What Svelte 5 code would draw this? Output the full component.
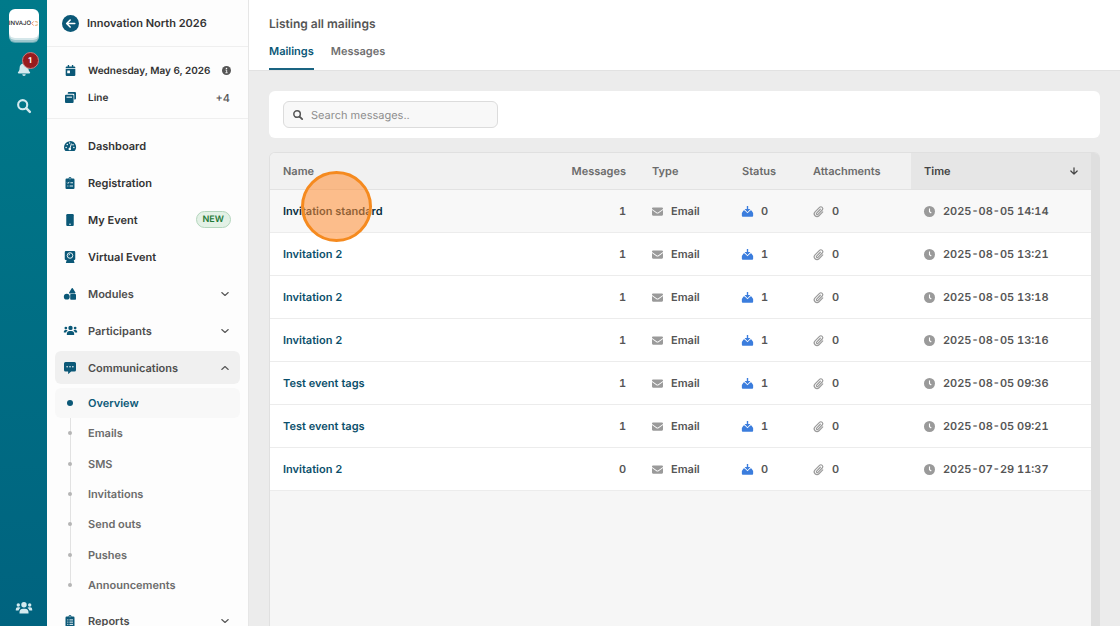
<script lang="ts">
	const navItems = [
		{ label: "Dashboard", icon: "gauge" },
		{ label: "Registration", icon: "clipboard" },
		{ label: "My Event", icon: "phone", badge: "NEW" },
		{ label: "Virtual Event", icon: "webcam" },
		{ label: "Modules", icon: "shapes", group: true },
		{ label: "Participants", icon: "users", group: true },
		{
			label: "Communications",
			icon: "comment",
			group: true,
			children: [
				"Overview",
				"Emails",
				"SMS",
				"Invitations",
				"Send outs",
				"Pushes",
				"Announcements",
			],
		},
		{ label: "Reports", icon: "report", group: true },
	];

	const mailings = [
		{ name: "Invitation standard", messages: 1, status: 0, time: "2025-08-05 14:14" },
		{ name: "Invitation 2", messages: 1, status: 1, time: "2025-08-05 13:21" },
		{ name: "Invitation 2", messages: 1, status: 1, time: "2025-08-05 13:18" },
		{ name: "Invitation 2", messages: 1, status: 1, time: "2025-08-05 13:16" },
		{ name: "Test event tags", messages: 1, status: 1, time: "2025-08-05 09:36" },
		{ name: "Test event tags", messages: 1, status: 1, time: "2025-08-05 09:21" },
		{ name: "Invitation 2", messages: 0, status: 0, time: "2025-07-29 11:37" },
	];

	let open = $state("Communications");
	let search = $state("");

	const visible = $derived(
		mailings.filter((m) => m.name.toLowerCase().includes(search.toLowerCase()))
	);

	function toggle(label: string) {
		open = open === label ? "" : label;
	}
</script>

{#snippet icon(name: string)}
	<svg class="icon {name}" viewBox="0 0 16 16" aria-hidden="true">
		{#if name === "gauge"}
			<path
				fill="currentColor"
				d="M8 1.500A8 8 0 0 0 0 9.500c0 1.700.5 3.200 1.300 4.500.2.400.500.500.900.500h11.600c.4 0 .7-.1.900-.5A8 8 0 0 0 8 1.500z"
			/>
			<path d="M7.700 12 9.800 5.300" stroke="#fff" stroke-width="1.300" stroke-linecap="round" />
			<circle cx="7.700" cy="12" r="1.700" fill="#fff" />
			<g fill="#fff">
				<circle cx="2.800" cy="10" r="1" />
				<circle cx="4.300" cy="6" r="1" />
				<circle cx="7.500" cy="4" r="1" />
				<circle cx="12" cy="6.200" r="1" />
				<circle cx="13.200" cy="10" r="1" />
			</g>
		{:else if name === "clipboard" || name === "report"}
			<path
				fill="currentColor"
				d="M3.500 2H6a2 2 0 0 1 4 0h2.500A1.500 1.500 0 0 1 14 3.500v11a1.500 1.500 0 0 1-1.500 1.500h-9A1.500 1.500 0 0 1 2 14.500v-11A1.500 1.500 0 0 1 3.500 2z"
			/>
			<circle cx="8" cy="2.300" r=".8" fill="#fff" />
			{#if name === "clipboard"}
				<path
					d="m4.300 7.500 1 1 1.700-2M8.500 7.700H12M4.500 12h1.300M7.500 12H12"
					stroke="#fff"
					stroke-width="1.200"
					fill="none"
				/>
			{:else}
				<path
					d="M4.300 6.500h1.500M7.300 6.500H12M4.300 9.500h1.500M7.300 9.500H12M4.300 12.500h1.500M7.300 12.500H12"
					stroke="#fff"
					stroke-width="1.200"
				/>
			{/if}
		{:else if name === "phone"}
			<rect x="3" y="0" width="10" height="16" rx="1.500" fill="currentColor" />
			<circle cx="8" cy="13.800" r="1" fill="#fff" />
		{:else if name === "webcam"}
			<path
				fill="currentColor"
				d="M2.500 0h11A1.500 1.500 0 0 1 15 1.500v9a1.500 1.500 0 0 1-1.500 1.500H13l1 4H2.500l1-4h-1A1.500 1.500 0 0 1 1 10.500v-9A1.500 1.500 0 0 1 2.500 0z"
			/>
			<circle cx="8" cy="6" r="3.700" fill="none" stroke="#fff" stroke-width="1.200" />
			<path d="M6.300 6A1.800 1.800 0 0 1 8 4.300" stroke="#fff" fill="none" />
		{:else if name === "shapes"}
			<circle cx="3.700" cy="11.500" r="3.900" fill="currentColor" />
			<rect x="8.300" y="8" width="7.700" height="7.500" rx="1" fill="currentColor" />
			<path fill="currentColor" d="M10.300.3a.8.800 0 0 1 1.400 0l3.500 5.700a.8.800 0 0 1-.7 1.200h-7a.8.800 0 0 1-.7-1.200z" />
		{:else if name === "users"}
			<g fill="currentColor">
				<circle cx="8" cy="4.800" r="2.700" />
				<circle cx="2.300" cy="5" r="1.700" />
				<circle cx="13.700" cy="5" r="1.700" />
				<path d="M3.500 13.600v-1.300A3.600 3.600 0 0 1 7 8.700h2a3.600 3.600 0 0 1 3.500 3.600v1.300z" />
				<path d="M-.2 10.500V9.300a2 2 0 0 1 2-2h1.400c.5 0 1 .2 1.300.5a4.800 4.800 0 0 0-1.900 2.700z" />
				<path d="M16.200 10.500V9.300a2 2 0 0 0-2-2h-1.400c-.5 0-1 .2-1.300.5a4.800 4.800 0 0 1 1.900 2.700z" />
			</g>
		{:else if name === "comment"}
			<path
				fill="currentColor"
				d="M2 0h12a2 2 0 0 1 2 2v8.500a2 2 0 0 1-2 2H9.500L6.200 15.700c-.3.300-.7.100-.7-.2v-3H2a2 2 0 0 1-2-2V2a2 2 0 0 1 2-2z"
			/>
			<g fill="#fff">
				<circle cx="4.200" cy="6.300" r="1" />
				<circle cx="8" cy="6.300" r="1" />
				<circle cx="11.800" cy="6.300" r="1" />
			</g>
		{:else if name === "calendar"}
			<path
				fill="currentColor"
				d="M1 5.500h14v9a1.500 1.500 0 0 1-1.500 1.500h-11A1.500 1.500 0 0 1 1 14.500zM2.500 2H4V0h2v2h4V0h2v2h1.500A1.500 1.500 0 0 1 15 3.500v1H1v-1A1.500 1.500 0 0 1 2.500 2z"
			/>
			<rect x="3.200" y="8" width="4" height="4" rx=".5" fill="#fff" />
		{:else if name === "windows"}
			<path
				fill="currentColor"
				d="M5.500 0h9A1.500 1.500 0 0 1 16 1.500v8a1.500 1.500 0 0 1-1.500 1.500H13.500V4A1.500 1.500 0 0 0 12 2.500H4v-1A1.500 1.500 0 0 1 5.500 0z"
			/>
			<path
				fill="currentColor"
				d="M1.500 4h9.500a1.500 1.500 0 0 1 1.500 1.500v9A1.500 1.500 0 0 1 11 16H1.500A1.500 1.500 0 0 1 0 14.500v-9A1.500 1.500 0 0 1 1.500 4z"
			/>
			<path d="M2.200 7.500h8" stroke="#fff" stroke-width="1.500" />
		{:else if name === "info"}
			<circle cx="8" cy="8" r="8" fill="currentColor" />
			<circle cx="8" cy="4.300" r="1.400" fill="#fff" />
			<path d="M6.300 7.300H8.300v4.500M6 12h4" stroke="#fff" stroke-width="1.500" fill="none" />
		{:else if name === "bell"}
			<path
				fill="currentColor"
				d="M8 16a2 2 0 0 0 2-2H6a2 2 0 0 0 2 2zm6.700-4.700c-.6-.6-1.700-1.600-1.700-4.800a5 5 0 0 0-4-4.800V1a1 1 0 0 0-2 0v.7a5 5 0 0 0-4 4.800c0 3.200-1.100 4.200-1.700 4.800-.7.700-.2 1.700.7 1.700h12c.9 0 1.400-1 .7-1.700z"
			/>
		{:else if name === "search"}
			<circle cx="6.500" cy="6.500" r="5.200" fill="none" stroke="currentColor" stroke-width="2.400" />
			<path d="m10.500 10.500 4.200 4.200" stroke="currentColor" stroke-width="2.800" stroke-linecap="round" />
		{:else if name === "chevron"}
			<path
				d="m1.500 5 6.500 6 6.500-6"
				fill="none"
				stroke="currentColor"
				stroke-width="2.200"
				stroke-linecap="round"
				stroke-linejoin="round"
			/>
		{:else if name === "back"}
			<circle cx="8" cy="8" r="8" fill="currentColor" />
			<path
				d="M12 8H4.700M7.700 4.700 4.400 8l3.300 3.300"
				fill="none"
				stroke="#fff"
				stroke-width="1.500"
				stroke-linecap="round"
				stroke-linejoin="round"
			/>
		{:else if name === "envelope"}
			<path fill="currentColor" d="M1.500 2h13A1.500 1.500 0 0 1 16 3.500v.8L9.300 9.200a2.200 2.200 0 0 1-2.600 0L0 4.300v-.8A1.500 1.500 0 0 1 1.500 2z" />
			<path fill="currentColor" d="M0 5.900V12.500A1.500 1.500 0 0 0 1.500 14h13a1.500 1.500 0 0 0 1.500-1.500V5.900l-6 4.400a3.400 3.400 0 0 1-4 0z" />
		{:else if name === "inbox"}
			<path fill="currentColor" d="M7 0h2v4.500h3.200L8 9 3.800 4.500H7z" />
			<path
				fill="currentColor"
				d="M2.600 6.500h1.300L8 10.700l4.100-4.200h1.300c.4 0 .7.200.9.600l1.900 3.200v4a1.300 1.300 0 0 1-1.300 1.300H1.100A1.300 1.300 0 0 1-.2 14.300v-4l1.900-3.200c.2-.4.500-.6.900-.6z"
			/>
		{:else if name === "clip"}
			<path
				d="M10.700 4.700 5.300 10.300a1.300 1.300 0 0 0 1.900 1.900l6.200-6.400a2.700 2.700 0 0 0-3.900-3.900L3 8.500a4 4 0 0 0 5.700 5.700l5.500-5.700"
				fill="none"
				stroke="currentColor"
				stroke-width="1.700"
				stroke-linecap="round"
			/>
		{:else if name === "clock"}
			<circle cx="8" cy="8" r="8" fill="currentColor" />
			<path d="M8 3.500V8.300l2.600 1.900" fill="none" stroke="#fff" stroke-width="1.600" />
		{:else if name === "arrow"}
			<path
				d="M8 1.500V14M1.700 8 8 14.300 14.300 8"
				fill="none"
				stroke="currentColor"
				stroke-width="2.500"
				stroke-linecap="round"
				stroke-linejoin="round"
			/>
		{/if}
	</svg>
{/snippet}

<div class="app">
	<div class="rail">
		<a class="logo" href="#home">
			INVAJO
			<svg viewBox="0 0 8 6" aria-hidden="true">
				<path d="M3 .5.700 3 3 5.500" fill="none" stroke="#e67a4e" />
				<path d="M4.500.8h2.700v1.700M7.200 3.500v1.700H4.500" fill="none" stroke="#e0a96a" />
			</svg>
		</a>
		<button class="rail-btn" aria-label="Notifications">
			{@render icon("bell")}
			<span class="count">1</span>
		</button>
		<button class="rail-btn" aria-label="Search">{@render icon("search")}</button>
		<button class="rail-btn last" aria-label="Users">{@render icon("users")}</button>
	</div>

	<aside class="sidebar">
		<header class="event">
			<a href="#events" aria-label="Back">{@render icon("back")}</a>
			<strong>Innovation North 2026</strong>
		</header>

		<div class="details">
			<div class="detail">
				{@render icon("calendar")}
				<span class="date">Wednesday, May 6, 2026</span>
				{@render icon("info")}
			</div>
			<div class="detail">
				{@render icon("windows")}
				<span class="date">Line</span>
				<span class="more">+4</span>
			</div>
		</div>

		<nav>
			{#each navItems as item}
				{#if item.group}
					<button
						class="nav-item group"
						class:open={open === item.label}
						aria-expanded={open === item.label}
						onclick={() => toggle(item.label)}
					>
						{@render icon(item.icon)}
						<span>{item.label}</span>
						{@render icon("chevron")}
					</button>
				{:else}
					<a class="nav-item" href="#{item.icon}">
						{@render icon(item.icon)}
						<span>{item.label}</span>
						{#if item.badge}<span class="badge">{item.badge}</span>{/if}
					</a>
				{/if}
				{#if item.children && open === item.label}
					<ul class="sub">
						{#each item.children as child, i}
							<li>
								<a href="#{child}" class:active={i === 0}>
									<span class="dot"></span>
									{child}
								</a>
							</li>
						{/each}
					</ul>
				{/if}
			{/each}
		</nav>
	</aside>

	<main>
		<header class="page-head">
			<h1>Listing all mailings</h1>
			<div class="tabs">
				<a href="#mailings" class="active">Mailings</a>
				<a href="#messages">Messages</a>
			</div>
		</header>

		<div class="content">
			<div class="toolbar">
				<label class="search-box">
					{@render icon("search")}
					<input type="text" placeholder="Search messages.." aria-label="Search messages" bind:value={search} />
				</label>
			</div>

			<div class="table-card">
				<div class="table-area">
					<table>
						<colgroup>
							<col />
							<col class="w-messages" />
							<col class="w-type" />
							<col class="w-status" />
							<col class="w-attachments" />
							<col class="w-time" />
						</colgroup>
						<thead>
							<tr>
								<th>Name</th>
								<th class="num">Messages</th>
								<th>Type</th>
								<th>Status</th>
								<th>Attachments</th>
								<th class="sorted" aria-sort="descending">
									<button>Time {@render icon("arrow")}</button>
								</th>
							</tr>
						</thead>
						<tbody>
							{#each visible as m, i}
								<tr class:hovered={i === 0}>
									<td class="name">
										<a href="#mailing">{m.name}</a>
										{#if i === 0}<span class="marker"></span>{/if}
									</td>
									<td class="num">{m.messages}</td>
									<td><span class="cell">{@render icon("envelope")}Email</span></td>
									<td><span class="cell">{@render icon("inbox")}{m.status}</span></td>
									<td><span class="cell">{@render icon("clip")}0</span></td>
									<td><span class="cell">{@render icon("clock")}{m.time}</span></td>
								</tr>
							{/each}
						</tbody>
					</table>
				</div>
				<div class="scrollbar"></div>
			</div>
		</div>
	</main>
</div>

<style>
	:global(body) {
		font-family: Inter, "Liberation Sans", sans-serif;
		font-size: 11px;
		font-weight: 600;
		line-height: 16px;
		text-rendering: geometricPrecision;
		color: #555;
	}

	.app {
		display: flex;
		height: 100vh;
		overflow: hidden;
		background: #ececec;
	}

	.app * {
		box-sizing: border-box;
	}

	a {
		color: inherit;
		text-decoration: none;
	}

	button {
		font: inherit;
		text-rendering: inherit;
		color: inherit;
		background: none;
		border: 0;
		padding: 0;
		cursor: pointer;
	}

	.icon {
		flex: none;
		width: 12px;
		height: 12px;
		overflow: visible;
	}

	/* Rail */
	.rail {
		flex: none;
		width: 47px;
		display: flex;
		flex-direction: column;
		align-items: center;
		padding: 9px 0 10px;
		background: linear-gradient(#007a8a, #00637f);
		color: #d3eaef;
	}

	.logo {
		display: flex;
		align-items: center;
		justify-content: center;
		width: 30px;
		height: 29px;
		border-radius: 6px;
		background: #fff;
		box-shadow:
			0 2px 0 #d5e7ea,
			0 4px 0 #9cc7ce,
			0 5px 0 #5aa5b0;
		color: #222;
		font-size: 6px;
		font-weight: 500;
	}

	.logo svg {
		width: 7px;
		height: 5px;
	}

	.rail-btn {
		position: relative;
		display: flex;
		margin-top: 24px;
	}

	.rail-btn .icon {
		width: 14px;
		height: 14px;
	}

	.rail-btn .users {
		width: 16px;
		height: 16px;
	}

	.rail-btn + .rail-btn {
		margin-top: 23px;
	}

	.rail-btn + .rail-btn.last {
		margin-top: auto;
	}

	.count {
		position: absolute;
		top: -10px;
		left: 5px;
		width: 17px;
		height: 17px;
		border: 1px solid #c87f83;
		border-radius: 50%;
		background: #981b1e;
		color: #fff;
		font-size: 8px;
		font-weight: 700;
		line-height: 15px;
		text-align: center;
	}

	/* Sidebar */
	.sidebar {
		flex: none;
		width: 202px;
		overflow: hidden;
		background: #fdfdfd;
		border-right: 1px solid #e6e6e6;
		color: #333;
	}

	.sidebar .icon {
		color: #0b5877;
	}

	.event {
		display: flex;
		align-items: center;
		gap: 8px;
		height: 47px;
		padding: 0 15px;
		border-bottom: 1px solid #efefef;
	}

	.event a {
		display: flex;
	}

	.event .icon {
		width: 17px;
		height: 17px;
	}

	.event strong {
		font-weight: 600;
	}

	.details {
		padding: 10px 18px 7px;
		border-bottom: 1px solid #efefef;
	}

	.detail {
		display: flex;
		align-items: center;
		gap: 12px;
		height: 27px;
	}

	.detail .icon {
		width: 11px;
		height: 11px;
	}

	.sidebar .info {
		width: 9px;
		height: 9px;
		margin-left: auto;
		color: #555;
	}

	.date {
		font-size: 10px;
		white-space: nowrap;
	}

	.more {
		margin-left: auto;
		color: #555;
		font-weight: 500;
	}

	nav {
		display: flex;
		flex-direction: column;
		gap: 4px;
		padding: 10px 8px;
	}

	.nav-item {
		display: flex;
		align-items: center;
		gap: 12px;
		height: 33px;
		padding: 0 9px;
		border-radius: 6px;
		text-align: left;
	}

	.nav-item.group {
		color: #4d4d4d;
	}

	.nav-item.open {
		background: #f0f0f0;
	}

	.nav-item .users {
		width: 13px;
		height: 13px;
		margin-right: -1px;
	}

	.nav-item .chevron {
		width: 8px;
		height: 8px;
		margin: 0 2px 0 auto;
		color: #555;
	}

	.open .chevron {
		transform: rotate(180deg);
	}

	.badge {
		margin-left: auto;
		padding: 0 6px;
		border: 1px solid #b4d6bd;
		border-radius: 9px;
		background: #e3f1e6;
		color: #1f7a37;
		font-size: 9px;
		line-height: 15px;
	}

	.sub {
		position: relative;
		display: grid;
		grid-auto-rows: 1fr;
		min-height: 212px;
		margin: 0;
		padding: 0;
		list-style: none;
		color: #6b6b6b;
	}

	.sub::before {
		content: "";
		position: absolute;
		top: 15px;
		bottom: 15px;
		left: 15px;
		width: 1px;
		background: #e2e2e2;
	}

	.sub a {
		position: relative;
		display: flex;
		align-items: center;
		gap: 15px;
		height: 100%;
		padding: 0 13px;
		border-radius: 6px;
	}

	.sub .dot {
		width: 4px;
		height: 4px;
		margin: 0 1px 0 0;
		border-radius: 50%;
		background: #b5b5b5;
	}

	.sub a.active {
		background: #f8f8f8;
		color: #0b5877;
	}

	.sub .active .dot {
		width: 6px;
		height: 6px;
		margin: 0 0 0 -1px;
		background: #0b5877;
	}

	/* Page */
	main {
		flex: 1;
		min-width: 0;
		display: flex;
		flex-direction: column;
	}

	.page-head {
		padding: 15px 20px 0;
		background: #fff;
		border-bottom: 1px solid #e2e2e2;
	}

	h1 {
		margin: 0;
		font-size: 12px;
		font-weight: 600;
		line-height: 18px;
	}

	.tabs {
		display: flex;
		gap: 17px;
		color: #6f6f6f;
	}

	.tabs a {
		padding: 10px 0 9px;
		border-bottom: 2px solid transparent;
	}

	.tabs a.active {
		border-color: #1a6482;
		color: #0b5877;
	}

	.content {
		flex: 1;
		display: flex;
		flex-direction: column;
		gap: 14px;
		padding: 20px 20px 0;
	}

	.toolbar {
		padding: 10px 14px;
		border-radius: 6px;
		background: #fff;
	}

	.search-box {
		display: flex;
		align-items: center;
		gap: 8px;
		width: 215px;
		height: 27px;
		padding: 0 9px;
		border: 1px solid #dcdcdc;
		border-radius: 6px;
		background: #f8f8f8;
	}

	.search-box .icon {
		width: 10px;
		height: 10px;
	}

	input {
		flex: 1;
		min-width: 0;
		padding: 0;
		border: 0;
		outline: 0;
		background: none;
		font: inherit;
		text-rendering: inherit;
		font-weight: 400;
		color: #444;
	}

	input::placeholder {
		color: #8e8e8e;
	}

	.table-card {
		flex: 1;
		display: flex;
		border: 1px solid #e0e0e0;
		border-width: 1px 0 0 1px;
		border-radius: 6px 6px 0 0;
		overflow: hidden;
		background: #f6f6f6;
	}

	.table-area {
		flex: 1;
		min-width: 0;
	}

	.scrollbar {
		flex: none;
		width: 9px;
		background: #dfdfdf;
	}

	table {
		width: 100%;
		table-layout: fixed;
		border-collapse: separate;
		border-spacing: 0;
	}

	.w-messages {
		width: 90px;
	}

	.w-type {
		width: 90px;
	}

	.w-status {
		width: 71px;
	}

	.w-attachments {
		width: 111px;
	}

	.w-time {
		width: 180px;
	}

	th {
		height: 37px;
		padding: 0 13px;
		border-bottom: 1px solid #e2e2e2;
		background: #f1f1f1;
		color: #6b6b6b;
		font-weight: 600;
		text-align: left;
	}

	th.sorted {
		background: #e6e6e6;
		color: #444;
	}

	th button {
		display: flex;
		align-items: center;
		justify-content: space-between;
		width: 100%;
	}

	th .icon {
		width: 8px;
		height: 8px;
	}

	td {
		height: 43px;
		padding: 0 13px;
		border-bottom: 1px solid #ececec;
		background: #fff;
		font-variant-numeric: tabular-nums;
	}

	.num {
		text-align: right;
	}

	.hovered td {
		background: #f8f8f8;
	}

	.name {
		position: relative;
		color: #0b4f6b;
	}

	.hovered .name {
		z-index: 1;
		color: #062c3d;
	}

	.marker {
		position: absolute;
		top: -19px;
		left: 31px;
		width: 71px;
		height: 71px;
		border: 3px solid #f58a1f;
		border-radius: 50%;
		background: rgba(255, 140, 50, 0.55);
		pointer-events: none;
	}

	.cell {
		display: flex;
		align-items: center;
		gap: 8px;
	}

	.cell .icon {
		width: 11px;
		height: 11px;
		color: #9a9a9a;
	}

	.cell .inbox {
		color: #3b7ddd;
	}
</style>
